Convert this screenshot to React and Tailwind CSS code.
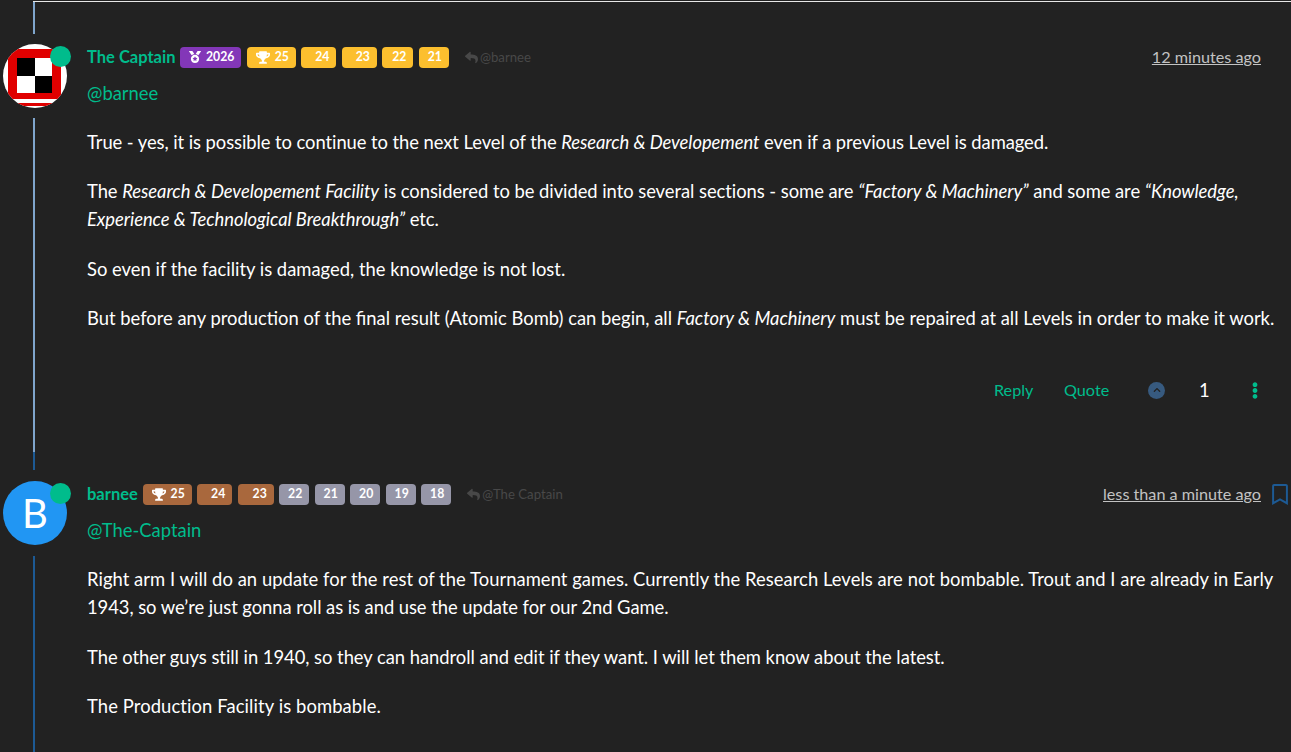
import { FaTrophy, FaMedal, FaReply, FaChevronUp, FaEllipsisV, FaRegBookmark } from 'react-icons/fa';

const GREEN = 'text-[#00bc8c]';

function Badge({ color, icon, wide, children }) {
  return (
    <span className={`inline-flex h-[21px] items-center justify-end rounded-[4px] px-[7px] text-[12.25px] font-bold leading-none text-white ${color} ${wide}`}>
      {icon}
      {children}
    </span>
  );
}

function Line({ color, height }) {
  return <div className={`ml-[33px] w-[2px] ${color} ${height}`}></div>;
}

function Header({ name, badges, replyTo, time, bookmark }) {
  return (
    <div className="flex h-[26px] items-center">
      <span className={`mr-[5px] text-[16.5px] font-bold ${GREEN}`}>{name}</span>
      <div className="flex items-center gap-[5.5px]">
        {badges}
      </div>
      <span className="ml-[16px] flex items-center gap-[2px] text-[13.2px] text-[#484848]">
        <FaReply className="h-[13px] w-[13px]" />
        {replyTo}
      </span>
      <a className="ml-auto text-[16.2px] text-[#c3c3c3] underline">{time}</a>
      <div className="ml-[11px] flex w-[19px] justify-start">
        {bookmark && <FaRegBookmark className="h-[21px] w-[16px] text-[#1d5a94]" />}
      </div>
    </div>
  );
}

const gold = 'bg-[#fcbf2e]';
const brown = 'bg-[#a9683d]';
const grey = 'bg-[#9696a8]';
const cup = <FaTrophy className="mr-[5px] h-[13px] w-[14px]" />;

export default function App() {
  return (
    <div className="h-[752px] overflow-hidden bg-[#222222] pt-[1px] font-['Lato',sans-serif] text-[18.4px] leading-[28px] text-white">
      <div className="ml-[33px] h-[1px] bg-[#e8e8e8]"></div>

      {/* first post */}
      <div className="flex h-[468px] items-stretch">
        <div className="flex w-[87px] shrink-0 flex-col">
          <Line color="bg-[#7fa5cc]" height="h-[32px]" />
          <div className="relative ml-[3px] mt-[10px] h-[64px] w-[64px]">
            <div className="h-[64px] w-[64px] overflow-hidden rounded-full bg-white pt-[5px]">
              <div className="ml-[5px] h-[50px] w-[53px] border-x-[9px] border-t-[9px] border-b-[6px] border-[#e00000]">
                <div className="grid h-[35px] w-[35px] grid-cols-2 grid-rows-2 bg-white">
                  <span className="bg-black"></span>
                  <span></span>
                  <span></span>
                  <span className="bg-black"></span>
                </div>
              </div>
              <div className="mt-[4px] h-[3px] bg-[#e00000]"></div>
            </div>
            <span className="absolute right-[-4px] top-[2px] h-[21px] w-[21px] rounded-full bg-[#00bc8c]"></span>
          </div>
          <div className="mt-[10px] flex-1">
            <Line color="bg-[#7fa5cc]" height="h-[334px]" />
            <Line color="bg-[#1d5a94]" height="h-[18px]" />
          </div>
        </div>
        <div className="min-w-0 flex-1 pt-[42px]">
          <Header
            name="The Captain"
            replyTo="@barnee"
            time="12 minutes ago"
            badges={
              <>
                <Badge color="bg-[#8337b8]" wide="w-[61px]" icon={<FaMedal className="mr-[5px] h-[14px] w-[12px]" />}>2026</Badge>
                <Badge color={gold} wide="w-[49px]" icon={cup}>25</Badge>
                <Badge color={gold} wide="w-[35px]">24</Badge>
                <Badge color={gold} wide="w-[35px]">23</Badge>
                <Badge color={gold} wide="w-[31px]">22</Badge>
                <Badge color={gold} wide="w-[30px]">21</Badge>
              </>
            }
          />
          <p className={`mt-[9px] ${GREEN}`}>@barnee</p>
          <p className="mt-[21px] tracking-[-0.07px]">True - yes, it is possible to continue to the next Level of the <em>Research &amp; Developement</em> even if a previous Level is damaged.</p>
          <p className="mt-[21px] tracking-[-0.05px]">The <em>Research &amp; Developement Facility</em> is considered to be divided into several sections - some are <em>“Factory &amp; Machinery”</em> and some are <em>“Knowledge, Experience &amp; Technological Breakthrough”</em> etc.</p>
          <p className="mt-[22px]">So even if the facility is damaged, the knowledge is not lost.</p>
          <p className="mt-[21px]">But before any production of the final result (Atomic Bomb) can begin, all <em>Factory &amp; Machinery</em> must be repaired at all Levels in order to make it work.</p>
          <div className={`mt-[44px] flex items-center pl-[907px] text-[16.2px] ${GREEN}`}>
            <span className="w-[70px]">Reply</span>
            <span className="w-[84px]">Quote</span>
            <span className="flex h-[17px] w-[17px] items-center justify-center rounded-full bg-[#375a7f] text-[#222222]">
              <FaChevronUp className="h-[8px] w-[8px]" />
            </span>
            <span className="ml-[34px] w-[18px] text-[18.4px] text-white">1</span>
            <FaEllipsisV className="ml-[32px] h-[17px] w-[12px]" />
          </div>
        </div>
      </div>

      {/* second post */}
      <div className="flex h-[281px] items-stretch">
        <div className="flex w-[87px] shrink-0 flex-col">
          <div className="relative ml-[3px] mt-[11px] h-[64px] w-[64px]">
            <div className="flex h-[64px] w-[64px] items-center justify-center rounded-full bg-[#2196f3] text-[40px] text-white">B</div>
            <span className="absolute right-[-4px] top-[2px] h-[21px] w-[21px] rounded-full bg-[#00bc8c]"></span>
          </div>
          <div className="mt-[11px] flex-1">
            <Line color="bg-[#1d5a94]" height="h-[196px]" />
          </div>
        </div>
        <div className="min-w-0 flex-1 pt-[11px]">
          <Header
            name="barnee"
            replyTo="@The Captain"
            time="less than a minute ago"
            bookmark
            badges={
              <>
                <Badge color={brown} wide="w-[49px]" icon={cup}>25</Badge>
                <Badge color={brown} wide="w-[35px]">24</Badge>
                <Badge color={brown} wide="w-[36px]">23</Badge>
                <Badge color={grey} wide="w-[30px]">22</Badge>
                <Badge color={grey} wide="w-[30px]">21</Badge>
                <Badge color={grey} wide="w-[30px]">20</Badge>
                <Badge color={grey} wide="w-[30px]">19</Badge>
                <Badge color={grey} wide="w-[30px]">18</Badge>
              </>
            }
          />
          <p className={`mt-[9px] ${GREEN}`}>@The-Captain</p>
          <p className="mt-[21.4px] pr-[10px]">
            <span className="tracking-[0.05px]">Right arm I will do an update for the rest of the Tournament games. Currently the Research Levels are not bombable. Trout and I are already in Early</span>{' '}
            <span className="tracking-[-0.06px]">1943, so we’re just gonna roll as is and use the update for our 2nd Game.</span>
          </p>
          <p className="mt-[21.4px] tracking-[-0.04px]">The other guys still in 1940, so they can handroll and edit if they want. I will let them know about the latest.</p>
          <p className="mt-[21.4px] tracking-[0.1px]">The Production Facility is bombable.</p>
        </div>
      </div>
    </div>
  );
}
